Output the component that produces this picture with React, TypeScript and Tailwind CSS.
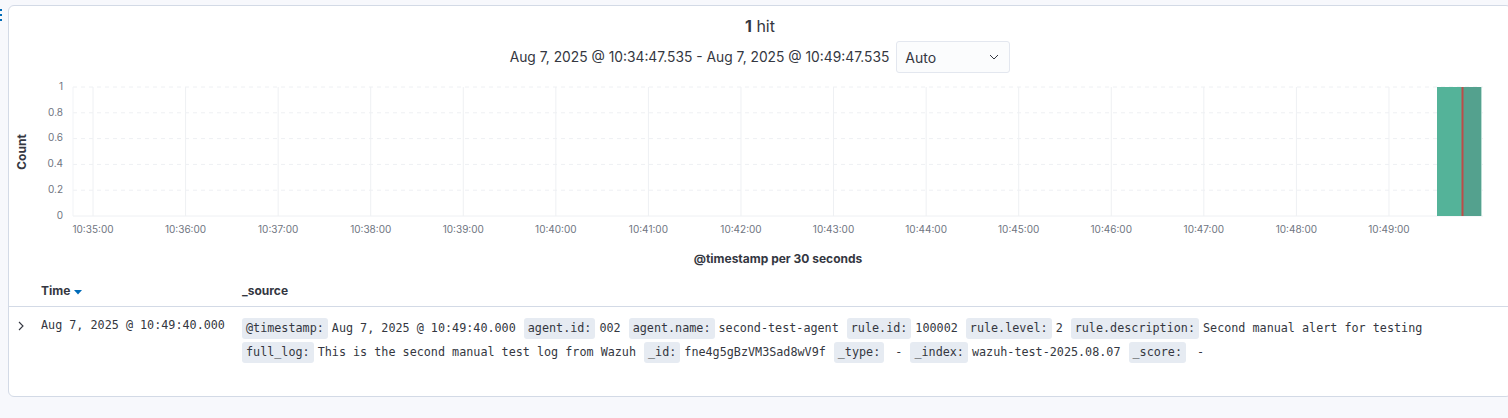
import React from "react";

const xTicks = Array.from({ length: 15 }, (_, i) => ({
  x: 58 + 92.57 * i,
  label: `10:${35 + i}:00`,
}));

const yTicks = [
  { v: "1", y: 7 },
  { v: "0.8", y: 32.8 },
  { v: "0.6", y: 58.6 },
  { v: "0.4", y: 84.4 },
  { v: "0.2", y: 110.2 },
  { v: "0", y: 136 },
];

const row1: [string, string][] = [
  ["@timestamp:", "Aug 7, 2025 @ 10:49:40.000"],
  ["agent.id:", "002"],
  ["agent.name:", "second-test-agent"],
  ["rule.id:", "100002"],
  ["rule.level:", "2"],
  ["rule.description:", "Second manual alert for testing"],
  ["full_log:", "This is the second manual test log from Wazuh"],
  ["_id:", "fne4g5gBzVM3Sad8wV9f"],
  ["_type:", " -"],
  ["_index:", "wazuh-test-2025.08.07"],
  ["_score:", " -"],
];

function Chart() {
  return (
    <svg width="1470" height="160" className="block shrink-0">
      {yTicks.map((t, i) => (
        <line
          key={"h" + i}
          x1={38}
          x2={1448}
          y1={t.y}
          y2={t.y}
          stroke="#eef0f3"
          strokeWidth={1}
          strokeDasharray={i === yTicks.length - 1 ? undefined : "4 4"}
        />
      ))}
      {xTicks.map((t, i) => (
        <line key={"v" + i} x1={t.x} x2={t.x} y1={7} y2={136} stroke="#eef0f3" strokeWidth={1} />
      ))}
      <line x1={38} x2={38} y1={7} y2={136} stroke="#f1f3f6" strokeWidth={1} />
      {yTicks.map((t, i) => (
        <text
          key={"yt" + i}
          x={28}
          y={t.y}
          textAnchor="end"
          dominantBaseline="middle"
          fontSize={10}
          fill="#6f7581"
          fontFamily="Inter, sans-serif"
        >
          {t.v}
        </text>
      ))}
      {xTicks.map((t, i) => (
        <text
          key={"xt" + i}
          x={t.x}
          y={150}
          textAnchor="middle"
          dominantBaseline="middle"
          fontSize={10}
          fill="#6f7581"
          fontFamily="Inter, sans-serif"
        >
          {t.label}
        </text>
      ))}
      <rect x={1402} y={7} width={26} height={129} fill="#54b399" />
      <rect x={1428} y={7} width={18} height={129} fill="#54a18e" />
      <rect x={1446} y={7} width={1} height={129} fill="#b9ddd3" />
      <rect x={1426.5} y={7} width={2} height={129} fill="#bd4c48" />
    </svg>
  );
}

export default function App() {
  return (
    <div
      className="w-[1508px] h-[418px] bg-[#f7f8fc] overflow-hidden flex text-[#343741]"
      style={{ fontFamily: "Inter, 'Noto Sans', sans-serif" }}
    >
      <div className="w-[8px] shrink-0 flex flex-col gap-[3px] pt-[9px]">
        <div className="w-[2px] h-[2px] bg-[#006bb8]" />
        <div className="w-[2px] h-[2px] bg-[#006bb8]" />
        <div className="w-[2px] h-[2px] bg-[#006bb8]" />
      </div>
      <div className="mt-[5px] w-[1504px] h-[392px] shrink-0 border border-[#d3dae6] rounded-[6px] bg-white flex flex-col">
        <div className="pt-[8px] h-[32px] flex items-end justify-center">
          <div className="h-[24px] leading-[24px] text-[16px]">
            <span className="font-bold">1</span> hit
          </div>
        </div>
        <div className="mt-[3px] flex items-center justify-center gap-[7px]">
          <span className="text-[13.8px]">Aug 7, 2025 @ 10:34:47.535 - Aug 7, 2025 @ 10:49:47.535</span>
          <div className="w-[114px] h-[32px] border border-[#e3e7ef] bg-[#fbfcfd] rounded-[3px] flex items-center justify-between pl-[8px] pr-[10px] text-[14px]">
            <span>Auto</span>
            <svg width="10" height="6" viewBox="0 0 10 6">
              <polyline points="1,1 5,5 9,1" fill="none" stroke="#343741" strokeWidth="1" />
            </svg>
          </div>
        </div>
        <div className="mt-[7px] flex">
          <div className="w-[26px] shrink-0">
            <div className="mt-[7px] h-[129px] flex items-center justify-center">
              <div className="-rotate-90 text-[12px] font-bold whitespace-nowrap">Count</div>
            </div>
          </div>
          <Chart />
        </div>
        <div className="mt-[11px] ml-[64px] w-[1410px] h-[16px] leading-[16px] text-center text-[12px] font-bold">
          @timestamp per 30 seconds
        </div>
        <div className="mt-[8px] h-[32px] border-b border-[#d3dae6] flex items-center text-[12px] font-bold">
          <div className="w-[32px] shrink-0" />
          <div className="w-[201px] shrink-0 flex items-center gap-[4px]">
            <span>Time</span>
            <svg width="8" height="5" viewBox="0 0 8 5" className="mt-[3px]">
              <polygon points="0,0 8,0 4,4.5" fill="#006bb8" />
            </svg>
          </div>
          <div>_source</div>
        </div>
        <div
          className="flex pt-[10px] text-[11.75px]"
          style={{ fontFamily: "'DejaVu Sans Mono', 'Liberation Mono', monospace" }}
        >
          <div className="w-[32px] shrink-0 pl-[9px] pt-[4px]">
            <svg width="6" height="10" viewBox="0 0 6 10">
              <polyline points="1,1 5,5 1,9" fill="none" stroke="#343741" strokeWidth="1.1" />
            </svg>
          </div>
          <div className="w-[201px] shrink-0 leading-[16px] whitespace-pre">Aug 7, 2025 @ 10:49:40.000</div>
          <div className="w-[1250px] shrink-0 flex flex-wrap gap-y-[3px] pt-[1px]">
            {row1.map(([k, v], i) => (
              <React.Fragment key={i}>
                <span className="h-[21px] leading-[21px] px-[4px] rounded-[3px] bg-[#e6ebf2] mr-[4px] whitespace-pre">
                  {k}
                </span>
                <span className="h-[21px] leading-[21px] mr-[8px] whitespace-pre">{v}</span>
              </React.Fragment>
            ))}
          </div>
        </div>
      </div>
    </div>
  );
}
